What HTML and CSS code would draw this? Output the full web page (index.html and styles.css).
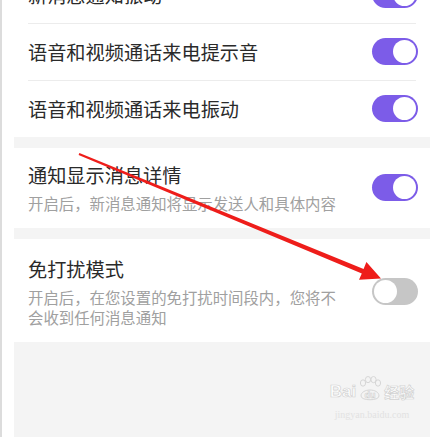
FILE: index.html
```html
<!DOCTYPE html>
<html lang="zh">
<head>
  <meta charset="utf-8">
  <title>消息通知设置</title>
  <link rel="stylesheet" href="styles.css">
</head>
<body>
<div class="screen">
  <div class="panel">

    <!-- group: sound & vibration -->
    <div class="group first">
      <div class="row">
        <div class="text"><div class="title">新消息通知振动</div></div>
        <span class="toggle on"></span>
      </div>
      <div class="row">
        <div class="text"><div class="title">语音和视频通话来电提示音</div></div>
        <span class="toggle on"></span>
      </div>
      <div class="row">
        <div class="text"><div class="title">语音和视频通话来电振动</div></div>
        <span class="toggle on"></span>
      </div>
    </div>

    <!-- group: details -->
    <div class="group">
      <div class="row tall">
        <div class="text">
          <div class="title">通知显示消息详情</div>
          <div class="sub">开启后，新消息通知将显示发送人和具体内容</div>
        </div>
        <span class="toggle on"></span>
      </div>
    </div>

    <!-- group: do not disturb -->
    <div class="group">
      <div class="row tall dnd">
        <div class="text">
          <div class="title">免打扰模式</div>
          <div class="sub">开启后，在您设置的免打扰时间段内，您将不会收到任何消息通知</div>
        </div>
        <span class="toggle"></span>
      </div>
    </div>

    <div class="rest"></div>
  </div>

  <!-- annotation arrow drawn over the screenshot -->
  <svg class="arrow" width="443" height="437" viewBox="0 0 443 437">
    <polygon fill="#ee1d1a" points="77.4,152.9 361.6,269 364.4,262 379,278.5 357,279.8 359.8,273.6 76.6,155.1"/>
  </svg>

  <div class="mark">
    <div class="mark-top">
      <span class="mark-bai">Bai</span>
      <span class="mark-paw">
        <svg width="26" height="26" viewBox="0 0 26 26">
          <g fill="none" stroke="#d6d6d6" stroke-width="1">
            <ellipse cx="6" cy="7" rx="2.6" ry="3.2"/>
            <ellipse cx="11" cy="3.6" rx="2.6" ry="3.1"/>
            <ellipse cx="16.5" cy="3.6" rx="2.6" ry="3.1"/>
            <ellipse cx="21" cy="7" rx="2.6" ry="3.2"/>
            <path d="M4 20 C4 12 22 12 22 20 C22 25 4 25 4 20 Z"/>
          </g>
          <text x="13" y="22" text-anchor="middle" font-size="9" fill="#fff" stroke="#d0d0d0" stroke-width="0.6" font-family="Liberation Sans, sans-serif" font-weight="bold">du</text>
        </svg>
      </span>
      <span class="mark-jy">经验</span>
    </div>
    <div class="mark-url">jingyan.baidu.com</div>
  </div>
</div>
</body>
</html>
```

FILE: styles.css
```css
/** whole window **/
  body {
    margin: 0;
    background: #ffffff;
    font-family: "Noto Sans CJK SC", "Noto Sans", sans-serif;
  }

  .screen {
    position: relative;
    width: 443px;
    height: 437px;
    overflow: hidden;
    box-sizing: border-box;
    border-left: 2px solid #dcdcdc;
    padding: 0 13px 0 12px;
  }

/** the settings card **/
  .panel {
    background: #f4f4f4;
    height: 100%;
    display: flex;
    flex-direction: column;
    gap: 11px;
  }

  .group {
    background: #ffffff;
  }

  .group.first {
    margin-top: -34px;
  }

  .row {
    display: flex;
    align-items: center;
    justify-content: space-between;
    height: 57px;
    padding: 0 12px 0 14px;
    position: relative;
  }

  .row + .row::before {
    content: "";
    position: absolute;
    top: 0;
    left: 14px;
    right: 14px;
    height: 1px;
    background: #ececec;
  }

  .row.tall {
    height: auto;
    padding-top: 14px;
    padding-bottom: 15px;
  }

  .row.dnd {
    padding-top: 17px;
    padding-bottom: 15px;
  }

  .title {
    font-size: 19.2px;
    line-height: 26px;
    color: #2a2a2a;
  }

  .sub {
    font-size: 15.4px;
    line-height: 20px;
    color: #a0a0a0;
    margin-top: 5px;
    max-width: 318px;
  }

/** switches **/
  .toggle {
    flex: none;
    width: 46px;
    height: 27px;
    border-radius: 14px;
    background: #c6c6c6;
    box-sizing: border-box;
    padding: 2px;
    display: flex;
    justify-content: flex-start;
  }

  .toggle::after {
    content: "";
    width: 23px;
    height: 23px;
    border-radius: 50%;
    background: #ffffff;
  }

  .toggle.on {
    background: #7c5ce8;
    justify-content: flex-end;
  }

  .rest {
    flex: 1;
  }

/** overlays **/
  .arrow {
    position: absolute;
    left: 0;
    top: 0;
  }

  .mark {
    position: absolute;
    left: 324px;
    top: 376px;
    width: 92px;
    text-align: center;
  }

  .mark-top {
    display: flex;
    align-items: flex-end;
    justify-content: center;
    gap: 1px;
  }

  .mark-bai,
  .mark-jy {
    font-family: "Liberation Sans", sans-serif;
    font-size: 17px;
    font-weight: bold;
    line-height: 20px;
    color: #ffffff;
    -webkit-text-stroke: 0.7px #d2d2d2;
  }

  .mark-jy {
    font-family: "Noto Sans CJK SC", sans-serif;
    font-size: 15px;
  }

  .mark-paw {
    display: flex;
  }

  .mark-url {
    font-family: "Liberation Serif", serif;
    font-size: 10px;
    line-height: 14px;
    color: #e2e2e2;
    margin-top: 6px;
  }
```
